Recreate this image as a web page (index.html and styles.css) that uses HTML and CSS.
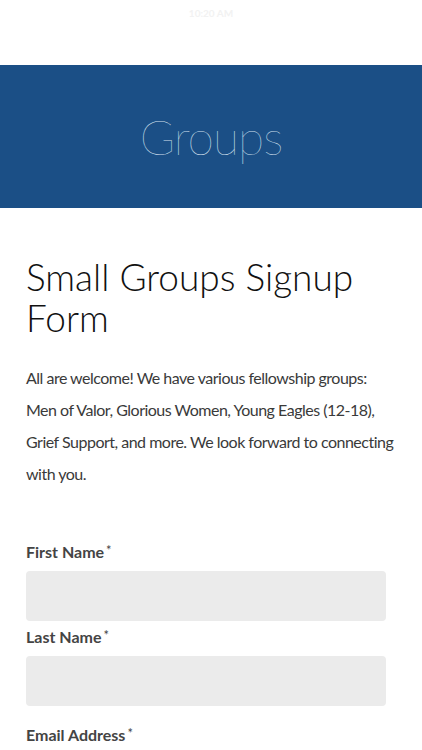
FILE: index.html
```html
<!DOCTYPE html>
<html lang="en">
<head>
<meta charset="utf-8">
<title>Groups</title>
<link rel="stylesheet" href="styles.css">
</head>
<body>
<div class="status">10:20 AM</div>
<header class="banner"><h1 class="banner-title">Groups</h1></header>
<main class="content">
  <h2 class="form-title">Small Groups Signup Form</h2>
  <p class="intro">All are welcome! We have various fellowship groups: Men of Valor, Glorious Women, Young Eagles (12-18), Grief Support, and more. We look forward to connecting with you.</p>
  <form class="form">
    <div class="field">
      <label class="label">First Name<span class="req">*</span></label>
      <div class="input"></div>
    </div>
    <div class="field">
      <label class="label">Last Name<span class="req">*</span></label>
      <div class="input"></div>
    </div>
    <div class="field field-email">
      <label class="label">Email Address<span class="req">*</span></label>
      <div class="input"></div>
    </div>
  </form>
</main>
</body>
</html>
```
FILE: styles.css
```css
* { box-sizing: border-box; }
body {
  margin: 0;
  background: #fff;
  font-family: Lato, "Open Sans", sans-serif;
  overflow: hidden;
}
.status {
  height: 65px;
  text-align: center;
  font-size: 10px;
  font-weight: 700;
  color: #f2f2f2;
  padding-top: 7px;
}
.banner {
  height: 143px;
  background: #1b4f86;
  display: flex;
  align-items: center;
  justify-content: center;
}
.banner-title {
  margin: 0;
  font-weight: 100;
  font-size: 48px;
  color: #d3e0ee;
  letter-spacing: -1px;
}
.content {
  padding: 48px 26px 0 26px;
}
.form-title {
  margin: 0;
  font-weight: 300;
  font-size: 37px;
  line-height: 41px;
  color: #111;
  width: 340px;
}
.intro {
  margin: 24px 0 0;
  font-weight: 400;
  font-size: 16px;
  line-height: 32px;
  letter-spacing: -0.5px;
  color: #3a3a3a;
  width: 371px;
}
.form {
  margin-top: 52px;
  width: 360px;
}
.field { display: flex; flex-direction: column; }
.label {
  font-weight: 700;
  font-size: 16px;
  color: #444;
  line-height: 20px;
  margin-bottom: 9px;
}
.req { font-size: 13px; line-height: 0; margin-left: 2px; vertical-align: 3px; font-weight: 400; color: #444; }
.input {
  height: 50px;
  background: #ebebeb;
  border-radius: 4px;
  margin-bottom: 6px;
}
.field-email { margin-top: 13px; }
```
